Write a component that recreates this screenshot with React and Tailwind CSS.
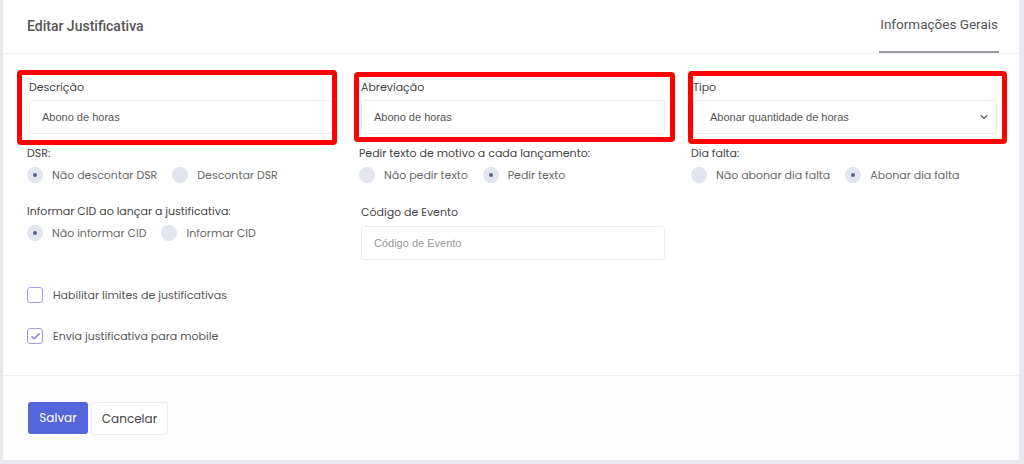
import { ChevronDown, Check } from "lucide-react";

const label = "text-[11px] leading-[16px] text-[#444]";
const input =
  "h-[34px] w-full rounded-[3px] border border-[#ececf1] bg-white px-[12px] flex items-center text-[11px] text-[#555] font-['Liberation_Sans',Arial,sans-serif]";

function Radio({ checked, children }) {
  return (
    <div className="flex items-center gap-[9px] mr-[15px]">
      <span className="w-[16px] h-[16px] rounded-full bg-[#e3e5ee] flex items-center justify-center">
        {checked && <span className="w-[4px] h-[4px] rounded-full bg-[#56658c]" />}
      </span>
      <span className="text-[11px] text-[#666]">{children}</span>
    </div>
  );
}

function RadioGroup({ title, options, selected }) {
  return (
    <div className="-ml-[2px]">
      <div className={label}>{title}</div>
      <div className="flex items-center h-[20px] mt-[4px]">
        {options.map((o, i) => (
          <Radio key={o} checked={i === selected}>
            {o}
          </Radio>
        ))}
      </div>
    </div>
  );
}

function Checkbox({ checked, children }) {
  return (
    <div className="flex items-center gap-[10px] h-[20px] -ml-[2px]">
      <span className="w-[16px] h-[16px] rounded-[3px] border border-[#a89de0] bg-white flex items-center justify-center">
        {checked && <Check className="w-[11px] h-[11px] text-[#7468cf]" strokeWidth={2.5} />}
      </span>
      <span className="text-[11px] text-[#555]">{children}</span>
    </div>
  );
}

function Highlight({ className }) {
  return (
    <div
      className={`absolute border-[5px] border-[#ff0000] rounded-[4px] pointer-events-none ${className}`}
    />
  );
}

export default function App() {
  return (
    <div className="w-[1024px] h-[464px] bg-[#e8e8ee] font-['Poppins','Lato','Open_Sans',sans-serif] overflow-hidden">
      <div className="relative ml-[3px] w-[1016px] h-[460px] bg-white flex flex-col">
        <header className="h-[54px] border-b border-[#f0f0f4] flex items-end justify-between pl-[24px] pr-[20px]">
          <div className="self-center text-[14px] font-medium text-[#555] font-['Roboto',sans-serif]">
            Editar Justificativa
          </div>
          <div className="h-full flex flex-col justify-end">
            <div className="text-[13.5px] text-[#555] pb-[17px] border-b-2 border-[#9a9aa0] px-[1px] font-['Roboto',sans-serif]">
              Informações Gerais
            </div>
          </div>
        </header>

        <main className="flex-1 pl-[26px] pr-[22px] pt-[25px] border-b border-[#f0f0f4]">
          <div className="grid grid-cols-[304px_304px_304px] gap-x-[28px]">
            <div>
              <div className={label}>Descrição</div>
              <div className={`${input} mt-[5px]`}>Abono de horas</div>
            </div>
            <div>
              <div className={label}>Abreviação</div>
              <div className={`${input} mt-[5px]`}>Abono de horas</div>
            </div>
            <div>
              <div className={label}>Tipo</div>
              <div className={`${input} mt-[5px] justify-between pl-[16px] pr-[6px]`}>
                <span>Abonar quantidade de horas</span>
                <ChevronDown className="w-[12px] h-[12px] text-[#555]" strokeWidth={2.25} />
              </div>
            </div>

            <div className="mt-[11px]">
              <RadioGroup title="DSR:" options={["Não descontar DSR", "Descontar DSR"]} selected={0} />
            </div>
            <div className="mt-[11px]">
              <RadioGroup
                title="Pedir texto de motivo a cada lançamento:"
                options={["Não pedir texto", "Pedir texto"]}
                selected={1}
              />
            </div>
            <div className="mt-[11px]">
              <RadioGroup title="Dia falta:" options={["Não abonar dia falta", "Abonar dia falta"]} selected={1} />
            </div>

            <div className="mt-[18px]">
              <RadioGroup
                title="Informar CID ao lançar a justificativa:"
                options={["Não informar CID", "Informar CID"]}
                selected={0}
              />
            </div>
            <div className="mt-[19px]">
              <div className={label}>Código de Evento</div>
              <div className={`${input} mt-[6px] text-[#999]`}>Código de Evento</div>
            </div>
            <div />
          </div>

          <div className="flex flex-col gap-[21px] mt-[25px]">
            <Checkbox>Habilitar limites de justificativas</Checkbox>
            <Checkbox checked>Envia justificativa para mobile</Checkbox>
          </div>
        </main>

        <footer className="h-[84px] bg-[#fdfdfd] pl-[25px] pt-[26px] flex items-start gap-[3px]">
          <button className="h-[32px] w-[60px] rounded-[3px] bg-[#5565dc] text-white text-[12px]">
            Salvar
          </button>
          <button className="h-[33px] w-[77px] rounded-[3px] border border-[#ececf1] bg-white text-[#444] text-[12px]">
            Cancelar
          </button>
        </footer>

        <Highlight className="left-[14px] top-[70px] w-[320px] h-[75px]" />
        <Highlight className="left-[351px] top-[72px] w-[321px] h-[70px]" />
        <Highlight className="left-[685px] top-[71px] w-[319px] h-[73px]" />
      </div>
    </div>
  );
}
